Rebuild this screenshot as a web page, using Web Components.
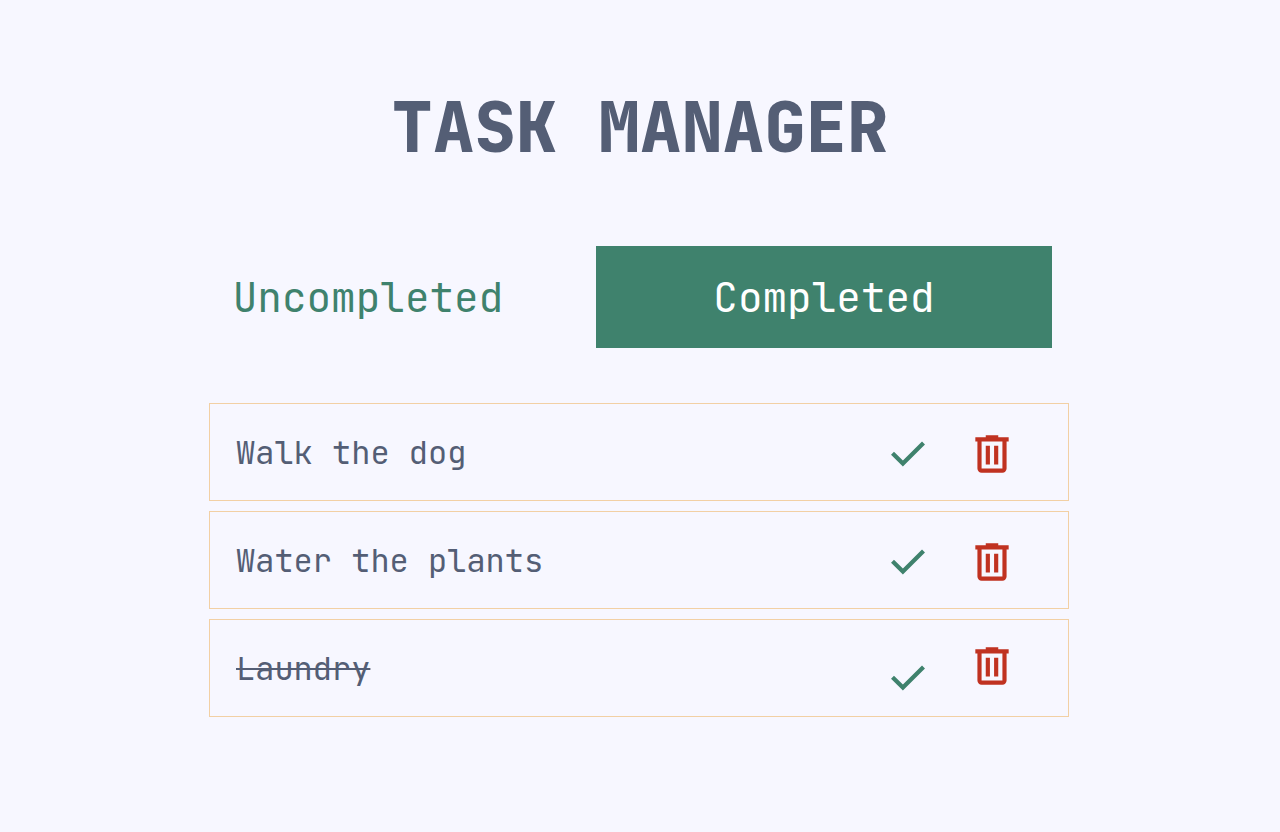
<!DOCTYPE html>
<html lang="en">
<head>
<meta charset="utf-8">
<meta name="viewport" content="width=device-width, initial-scale=1">
<title>Task Manager</title>
<style>
  :root {
    --paper: #f7f7ff;
    --ink: #545e75;
    --green: #3f826d;
    --sand: #f2d0a4;
    --red: #c03221;
  }
  body {
    margin: 0;
    background: var(--paper);
    color: var(--ink);
    font-family: "JetBrains Mono", "DejaVu Sans Mono", monospace;
  }
</style>
</head>
<body>
<task-manager>
  <task-tab slot="tab">Uncompleted</task-tab>
  <task-tab slot="tab" selected>Completed</task-tab>
  <task-item>Walk the dog</task-item>
  <task-item>Water the plants</task-item>
  <task-item done>Laundry</task-item>
</task-manager>

<template id="manager">
  <style>
    :host { display: block; }
    main { padding: 80px 0; }
    h1 { margin: 0; font-size: 69px; line-height: 96px; font-weight: 800; text-align: center; }
    nav { display: grid; grid-template-columns: 1fr 1fr; margin: 70px 228px 0 140px; }
    .list { display: flex; flex-direction: column; gap: 10px; margin: 55px 211px 0 209px; }
    @media (max-width: 1100px) {
      nav, .list { margin-left: 16px; margin-right: 16px; }
    }
    @media (max-width: 700px) {
      h1 { font-size: 41px; }
      nav { grid-template-columns: 1fr; }
    }
  </style>
  <main>
    <h1>TASK MANAGER</h1>
    <nav aria-label="Task filter"><slot name="tab"></slot></nav>
    <div class="list" role="list"><slot></slot></div>
  </main>
</template>

<template id="tab">
  <style>
    :host { display: block; }
    button {
      display: block; width: 100%; height: 102px; margin: 0; padding: 0;
      border: 0; background: transparent; color: var(--green);
      font: inherit; font-size: 41px; line-height: 56px; cursor: pointer;
    }
    :host([selected]) button { background: var(--green); color: #fff; }
  </style>
  <button type="button"><slot></slot></button>
</template>

<template id="item">
  <style>
    :host {
      display: flex; align-items: flex-start; gap: 34px;
      box-sizing: border-box; min-height: 98px; padding: 25px 51px 12px 26px;
      border: 1px solid var(--sand);
    }
    .name { flex: 1; font-size: 32px; line-height: 48px; }
    button {
      flex: none; width: 50px; height: 50px; margin: 0; padding: 0;
      border: 0; background: none; cursor: pointer;
    }
    svg { display: block; width: 50px; height: 50px; fill: currentColor; }
    .check { color: var(--green); }
    .remove { color: var(--red); }
    :host([done]) { padding: 21px 51px 13px 26px; }
    :host([done]) .name { text-decoration: line-through; text-decoration-thickness: 2px; margin-top: 4px; }
    :host([done]) .check { align-self: flex-end; }
  </style>
  <span class="name"><slot></slot></span>
  <button class="check" type="button" aria-label="Toggle completed">
    <svg viewBox="0 0 24 24" aria-hidden="true"><path d="m9.55 18-5.7-5.7 1.425-1.425L9.55 15.15l9.175-9.175L20.15 7.4z"/></svg>
  </button>
  <button class="remove" type="button" aria-label="Delete task">
    <svg viewBox="0 0 24 24" aria-hidden="true"><path d="M7 21q-.825 0-1.412-.587T5 19V6H4V4h5V3h6v1h5v2h-1v13q0 .825-.587 1.413T17 21zM17 6H7v13h10zM9 17h2V8H9zm4 0h2V8h-2z"/></svg>
  </button>
</template>

<script>
  class TemplateElement extends HTMLElement {
    constructor() {
      super();
      const template = document.getElementById(this.constructor.template);
      this.attachShadow({ mode: "open" }).append(template.content.cloneNode(true));
    }
  }

  class TaskTab extends TemplateElement {
    static template = "tab";
    connectedCallback() {
      const button = this.shadowRoot.querySelector("button");
      button.setAttribute("aria-pressed", this.hasAttribute("selected"));
      button.onclick = () => {
        for (const tab of this.parentElement.querySelectorAll("task-tab")) {
          tab.toggleAttribute("selected", tab === this);
          tab.shadowRoot.querySelector("button").setAttribute("aria-pressed", tab === this);
        }
      };
    }
  }

  class TaskItem extends TemplateElement {
    static template = "item";
    connectedCallback() {
      this.setAttribute("role", "listitem");
      this.shadowRoot.querySelector(".check").onclick = () => this.toggleAttribute("done");
      this.shadowRoot.querySelector(".remove").onclick = () => this.remove();
    }
  }

  class TaskManager extends TemplateElement {
    static template = "manager";
  }

  customElements.define("task-tab", TaskTab);
  customElements.define("task-item", TaskItem);
  customElements.define("task-manager", TaskManager);
</script>
</body>
</html>
